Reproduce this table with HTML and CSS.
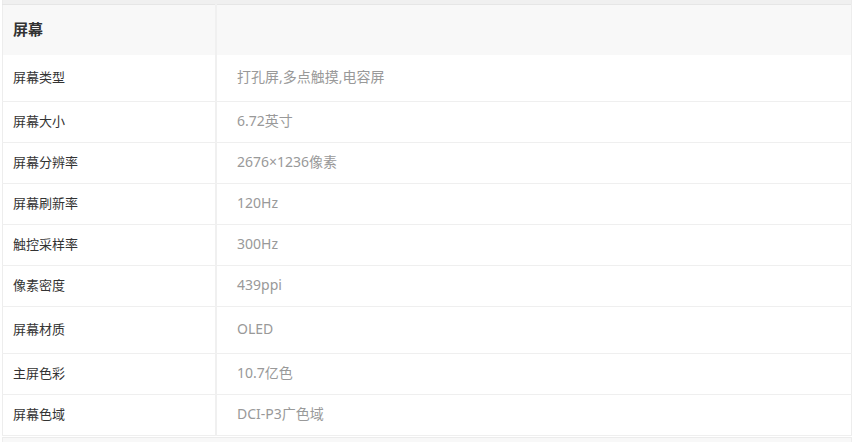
FILE: index.html
```html
<!DOCTYPE html>
<html lang="zh-CN">
<head>
    <meta charset="UTF-8">
    <title>屏幕参数</title>
    <link rel="stylesheet" href="styles.css">
</head>
<body>
    <section class="spec">
        <div class="spec-top"></div>
        <table class="spec-table">
            <tr class="head">
                <th class="name">屏幕</th>
                <th class="val"></th>
            </tr>
            <tr class="tall">
                <td class="name">屏幕类型</td>
                <td class="val">打孔屏,多点触摸,电容屏</td>
            </tr>
            <tr>
                <td class="name">屏幕大小</td>
                <td class="val">6.72英寸</td>
            </tr>
            <tr>
                <td class="name">屏幕分辨率</td>
                <td class="val">2676×1236像素</td>
            </tr>
            <tr>
                <td class="name">屏幕刷新率</td>
                <td class="val">120Hz</td>
            </tr>
            <tr>
                <td class="name">触控采样率</td>
                <td class="val">300Hz</td>
            </tr>
            <tr>
                <td class="name">像素密度</td>
                <td class="val">439ppi</td>
            </tr>
            <tr class="tall">
                <td class="name">屏幕材质</td>
                <td class="val">OLED</td>
            </tr>
            <tr>
                <td class="name">主屏色彩</td>
                <td class="val">10.7亿色</td>
            </tr>
            <tr>
                <td class="name">屏幕色域</td>
                <td class="val">DCI-P3广色域</td>
            </tr>
        </table>
        <div class="spec-next"></div>
    </section>
</body>
</html>
```

FILE: styles.css
```css
body,html{
    margin:0;
    background:#fff;
    overflow:hidden;
}
.spec{
    padding-left:2px;
    width:850px;
    font-family:"Noto Sans","Noto Sans CJK SC",sans-serif;
}
.spec-top{
    height:4px;
    background:#f0f0f0;
    border-left:1px solid #ebebeb;
    border-right:1px solid #ebebeb;
}
.spec-table{
    width:100%;
    border-collapse:collapse;
    border-left:1px solid #ededed;
    border-right:1px solid #ededed;
    border-top:1px solid #e6e6e6;
}
.spec-table th,
.spec-table td{
    padding:0 0 2px;
    text-align:left;
    border-bottom:1px solid #efefef;
    font-size:13px;
    line-height:18px;
    font-weight:normal;
    height:38px;
}
.spec-table .name{
    width:202px;
    padding-left:10px;
    color:#333;
    border-right:2px solid #f0f0f0;
}
.spec-table .val{
    padding-left:20px;
    color:#999;
    font-size:14px;
}
.spec-table .head th{
    height:48px;
    background:#f8f8f8;
    border-bottom:none;
}
.spec-table .head .name{
    font-size:15px;
    font-weight:bold;
    color:#333;
}
.spec-table .tall td{
    height:44px;
}
.spec-next{
    height:4px;
    margin-top:1px;
    border-top:1px solid #ececec;
    border-left:1px solid #ededed;
    border-right:1px solid #ededed;
    background:#f8f8f8;
}
```
